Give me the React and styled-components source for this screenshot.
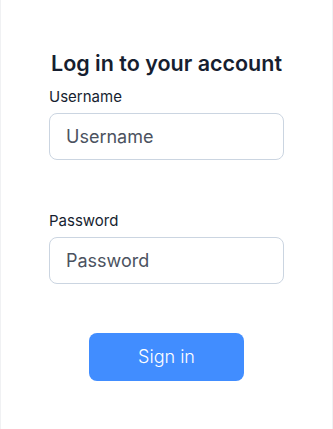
import React from "react";
import styled, { createGlobalStyle } from "styled-components";

const Global = createGlobalStyle`
  html, body { margin: 0; padding: 0; background: #fff; }
  body { font-family: Inter, "Noto Sans", sans-serif; }
  * { box-sizing: border-box; }
`;

const Page = styled.div`
  width: 333px;
  min-height: 429px;
  border-left: 1px solid #f0f1f3;
  border-right: 1px solid #f0f1f3;
  display: flex;
  flex-direction: column;
  align-items: center;
  padding-top: 49px;
`;

const Title = styled.h1`
  margin: 0;
  font-size: 21.5px;
  line-height: 28px;
  font-weight: 600;
  color: #161e30;
`;

const Form = styled.form`
  width: 235px;
  display: flex;
  flex-direction: column;
  margin-top: 10px;
`;

const Field = styled.div`
  display: flex;
  flex-direction: column;
  margin-bottom: ${(p) => p.$gap}px;
`;

const Label = styled.label`
  font-size: 15px;
  line-height: 20px;
  color: #161e30;
  margin-bottom: 6px;
`;

const Input = styled.input`
  height: 47px;
  width: 100%;
  border: 1px solid #cbd5e1;
  border-radius: 8px;
  padding: 0 16px;
  font-family: Inter, sans-serif;
  font-size: 18px;
  color: #161e30;
  outline: none;
  &::placeholder { color: #4b5260; }
`;

const Button = styled.button`
  align-self: center;
  width: 155px;
  height: 48px;
  border: none;
  border-radius: 8px;
  background: #418dff;
  color: #fff;
  font-family: Inter, sans-serif;
  font-size: 18px;
  font-weight: 300;
  padding: 0 0 2px;
`;

export default function App() {
  return (
    <>
      <Global />
      <Page>
        <Title>Log in to your account</Title>
        <Form onSubmit={(e) => e.preventDefault()}>
          <Field $gap={51}>
            <Label>Username</Label>
            <Input placeholder="Username" />
          </Field>
          <Field $gap={49}>
            <Label>Password</Label>
            <Input type="password" placeholder="Password" />
          </Field>
          <Button type="submit">Sign in</Button>
        </Form>
      </Page>
    </>
  );
}
